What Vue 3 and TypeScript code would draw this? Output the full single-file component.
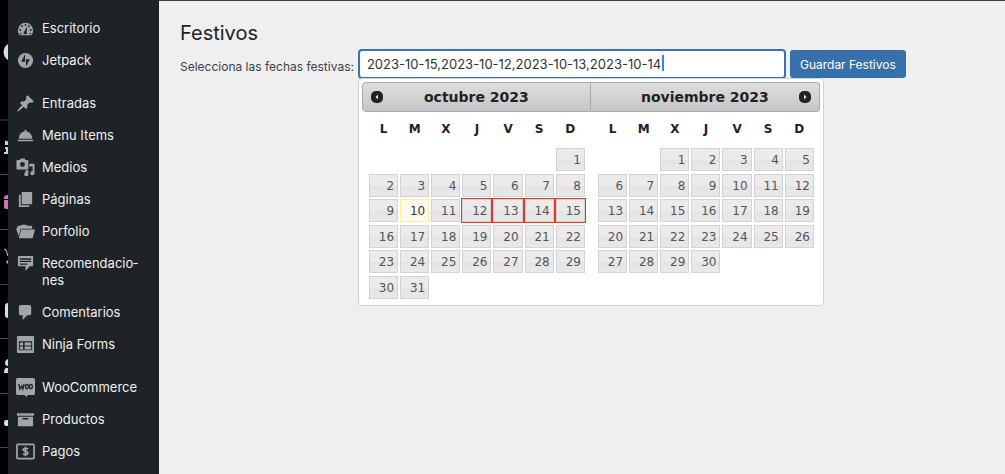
<script setup lang="ts">
import { ref } from 'vue'

interface MenuItem {
  label: string
  icon: string
  gap?: boolean
}

interface Month {
  title: string
  offset: number
  days: number
  today?: number
  selected: number[]
}

const menu: MenuItem[] = [
  { label: 'Escritorio', icon: 'dashboard' },
  { label: 'Jetpack', icon: 'jetpack' },
  { label: 'Entradas', icon: 'pin', gap: true },
  { label: 'Menu Items', icon: 'food' },
  { label: 'Medios', icon: 'media' },
  { label: 'Páginas', icon: 'pages' },
  { label: 'Porfolio', icon: 'portfolio' },
  { label: 'Recomendacio\u00adnes', icon: 'testimonial' },
  { label: 'Comentarios', icon: 'comment' },
  { label: 'Ninja Forms', icon: 'form' },
  { label: 'WooCommerce', icon: 'woo', gap: true },
  { label: 'Productos', icon: 'archive' },
  { label: 'Pagos', icon: 'money' },
]

const weekdays = ['L', 'M', 'X', 'J', 'V', 'S', 'D']

const months: Month[] = [
  { title: 'octubre 2023', offset: 6, days: 31, today: 10, selected: [12, 13, 14, 15] },
  { title: 'noviembre 2023', offset: 2, days: 30, selected: [] },
]

const dates = ref('2023-10-15,2023-10-12,2023-10-13,2023-10-14')

function weeks(month: Month): number[][] {
  const count = Math.ceil((month.offset + month.days) / 7)
  return Array.from({ length: count }, (_, w) =>
    Array.from({ length: 7 }, (_, d) => {
      const day = w * 7 + d - month.offset + 1
      return day >= 1 && day <= month.days ? day : 0
    }),
  )
}
</script>

<template>
  <div class="screen">
    <div class="rail" aria-hidden="true">
      <svg width="8" height="474" viewBox="0 0 8 474">
        <path d="M0 120h8M0 174.500h8M0 229.500h8M0 284.500h8M0 338.500h8M0 393.500h8M0 447.500h8" stroke="#4a4a4a" />
        <circle cx="13" cy="52" r="9.500" fill="#dcdcdc" />
        <path d="M5 141q3-1 3 1v3H5zM5 147h3v7H4v-2h2v-3H5z" fill="#d0d0d0" />
        <path d="M4 198q0-3 4-3v4H4zM4 200h4v9H6q-2 0-2-2z" fill="#c779c0" />
        <path d="M4 249q3 0 3 4l1 3M7 261h1v2H7z" stroke="#c8c8c8" fill="none" />
        <path d="M8 303q-3 0-3 3v9q0 3 3 3z" fill="#e0e0e0" />
        <path d="M8 359q-3 1-3 4t3 3zM4 373q0-6 4-5v5z" fill="#d8d8d8" />
        <path d="M8 420H6q-2 0-2 3t2 3h2z" fill="#e0e0e0" />
      </svg>
    </div>

    <nav class="sidebar" aria-label="Menú principal">
      <ul>
        <li v-for="item in menu" :key="item.label" :class="{ gap: item.gap }">
          <a href="#">
            <svg class="icon" width="20" height="20" viewBox="0 0 20 20" aria-hidden="true">
              <template v-if="item.icon === 'dashboard'">
                <path fill="currentColor" d="M3.800 17h12.400A7.900 7.900 0 0 0 18 12a8 8 0 1 0-16 0c0 2 .7 3.700 1.800 5z" />
                <path fill="#1d2327" d="M10 5a1 1 0 1 1 0 2 1 1 0 0 1 0-2zM6.300 6.500a1 1 0 1 1 0 2 1 1 0 0 1 0-2zM13.700 6.500a1 1 0 1 1 0 2 1 1 0 0 1 0-2zM4.500 10.500a1 1 0 1 1 0 2 1 1 0 0 1 0-2zM15.500 10.500a1 1 0 1 1 0 2 1 1 0 0 1 0-2zM11.700 8l-.4 5.500a1.700 1.700 0 1 1-2.400-.6zM4 15h2v1H4zM14 15h2v1h-2z" />
              </template>
              <template v-else-if="item.icon === 'jetpack'">
                <circle cx="10" cy="10" r="8" fill="currentColor" />
                <path fill="#1d2327" d="M9.500 3.500v7.800h-4zM10.500 16.500V8.700h4z" />
              </template>
              <path v-else-if="item.icon === 'pin'" fill="currentColor" d="M10.440 3.020l1.820-1.820 6.360 6.350-1.830 1.820c-1.050-.68-2.480-.57-3.410.36l-.75.750c-.92.930-1.040 2.350-.35 3.410l-1.830 1.820-2.410-2.410-2.800 2.790c-.42.420-3.380 2.710-3.800 2.290s1.860-3.390 2.280-3.810l2.790-2.790L4.100 9.360l1.830-1.820c1.050.690 2.480.570 3.400-.360l.75-.75c.93-.92 1.050-2.350.36-3.410z" />
              <path v-else-if="item.icon === 'food'" fill="currentColor" d="M10 4a1.200 1.200 0 0 1 1 1.900c3.700.5 6 3.600 6 7.600H3c0-4 2.300-7.100 6-7.600A1.200 1.200 0 0 1 10 4zM2 14.500h16V16H2z" />
              <path v-else-if="item.icon === 'media'" fill="currentColor" fill-rule="evenodd" d="M2 2h2l1-1.500h4L10 2h2a1 1 0 0 1 1 1v8a1 1 0 0 1-1 1H1.500a1 1 0 0 1-1-1V3a1 1 0 0 1 1-1zM6.800 4.300a2.600 2.600 0 1 0 0 5.200 2.600 2.600 0 0 0 0-5.200zM14 6h5.500v10a2.200 2.200 0 1 1-2-2.200V9H14zM10 13h3v4a2.200 2.200 0 1 1-2-2.200h-1z" />
              <path v-else-if="item.icon === 'pages'" fill="currentColor" d="M6 2h11v13H6zM3 5h2v11h9v2H3z" />
              <path v-else-if="item.icon === 'portfolio'" fill="currentColor" d="M1 5h1V4h3l1-1h5l1 1h5v3H5L3 15 0 7h1zM5.500 8H20l-2.500 9H3z" />
              <path v-else-if="item.icon === 'testimonial'" fill="currentColor" fill-rule="evenodd" d="M3 2h14a1 1 0 0 1 1 1v9a1 1 0 0 1-1 1h-2.500L10 18v-5H3a1 1 0 0 1-1-1V3a1 1 0 0 1 1-1zM4 4.500V6h12V4.500zM4 7.200v1.300h12V7.200zM4 10v1.300h8V10z" />
              <path v-else-if="item.icon === 'comment'" fill="currentColor" d="M5 2h9q2 0 2 2v7q0 2-2 2h-2l-5 5v-5H5q-2 0-2-2V4q0-2 2-2z" />
              <path v-else-if="item.icon === 'form'" fill="currentColor" fill-rule="evenodd" d="M2 1h16q1 0 1 1v16q0 1-1 1H2q-1 0-1-1V2q0-1 1-1zM3 6.500V16h14V6.500zM4 8h3.500v3H4zM9 8h7v3H9zM4 12.200h3.500v3H4zM9 12.200h7v3H9z" />
              <template v-else-if="item.icon === 'woo'">
                <path fill="currentColor" d="M2 0h16q2 0 2 2v14q0 2-2 2h-5.500L11 20l-2-2H2q-2 0-2-2V2q0-2 2-2z" />
                <path d="M3 6.500l1.200 5L6 8.500l1.200 3L8.500 6.500" stroke="#1d2327" stroke-width="1.500" fill="none" />
                <ellipse cx="11.500" cy="9" rx="1.500" ry="2.300" stroke="#1d2327" stroke-width="1.300" fill="none" />
                <ellipse cx="15.700" cy="9" rx="1.500" ry="2.300" stroke="#1d2327" stroke-width="1.300" fill="none" />
              </template>
              <path v-else-if="item.icon === 'archive'" fill="currentColor" fill-rule="evenodd" d="M1 3.500h18v2.500H1zM2 7h16v10H2zM7 8.500V10h6V8.500z" />
              <template v-else>
                <rect x="1" y="2.500" width="18" height="15" rx="1" fill="none" stroke="currentColor" stroke-width="1.800" />
                <path d="M12.800 7.300Q10 6 8 7.200c-1.200 1.500.4 2.300 2 2.600s3.200 1.200 2.200 2.700q-1.800 1.500-5 .2M10 5v10" fill="none" stroke="currentColor" stroke-width="1.800" />
              </template>
            </svg>
            <span>{{ item.label }}</span>
          </a>
        </li>
      </ul>
    </nav>

    <main class="content">
      <h1>Festivos</h1>
      <form class="form" @submit.prevent>
        <label for="dates">Selecciona las fechas festivas:</label>
        <div class="field">
          <input id="dates" v-model="dates" type="text" autocomplete="off" />
          <span class="caret" aria-hidden="true"></span>
          <div class="picker">
            <section v-for="(month, i) in months" :key="month.title" class="month">
              <header>
                <button v-if="i === 0" type="button" class="nav prev" aria-label="Anterior">
                  <svg width="12" height="12" viewBox="0 0 12 12"><rect width="12" height="12" rx="5" fill="#222" /><path d="M7 3.500v5L4.500 6z" fill="#e8e8e8" /></svg>
                </button>
                <h2>{{ month.title }}</h2>
                <button v-if="i === 1" type="button" class="nav next" aria-label="Siguiente">
                  <svg width="12" height="12" viewBox="0 0 12 12"><rect width="12" height="12" rx="5" fill="#222" /><path d="M5 3.500v5L7.500 6z" fill="#e8e8e8" /></svg>
                </button>
              </header>
              <table>
                <thead>
                  <tr>
                    <th v-for="d in weekdays" :key="d" scope="col">{{ d }}</th>
                  </tr>
                </thead>
                <tbody>
                  <tr v-for="(week, w) in weeks(month)" :key="w">
                    <td v-for="(day, d) in week" :key="d" :class="{ selected: month.selected.includes(day) }">
                      <a v-if="day" href="#" :class="{ today: day === month.today }">{{ day }}</a>
                    </td>
                  </tr>
                </tbody>
              </table>
            </section>
          </div>
        </div>
        <button type="submit" class="save">Guardar Festivos</button>
      </form>
    </main>
  </div>
</template>

<style>
body {
  background: #efefef;
}
</style>

<style scoped>
.screen {
  display: flex;
  height: 100vh;
  overflow: hidden;
  font-family: Inter, "Liberation Sans", sans-serif;
  font-size: 13px;
  color: #3c434a;
}

.rail {
  flex: 0 0 8px;
  background: #000;
}

.rail svg {
  display: block;
}

.sidebar {
  flex: 0 0 151px;
  background: #1d2327;
}

.sidebar ul {
  margin: 0;
  padding: 12px 0 0;
  list-style: none;
}

.sidebar .gap {
  margin-top: 11px;
}

.sidebar a {
  display: flex;
  gap: 7px;
  padding: 8px 16px 7px 8px;
  color: #f0f0f1;
  line-height: 17px;
  text-decoration: none;
}

.icon {
  flex: none;
  width: 19px;
  height: 19px;
  margin: -1px 0;
  color: #a0a5aa;
}

.content {
  flex: 1;
  min-width: 0;
  padding: 20px 20px 0 21px;
  border-top: 1px solid #3c4046;
}

h1 {
  margin: 0;
  color: #1d2327;
  font-size: 20px;
  font-weight: 400;
  line-height: 25px;
}

.form {
  display: flex;
  align-items: center;
  gap: 4px;
  margin-top: 3px;
}

label {
  padding-top: 4px;
  white-space: nowrap;
  font-size: 12px;
}

.field {
  position: relative;
  flex: 0 1 428px;
}

input {
  display: block;
  box-sizing: border-box;
  width: 100%;
  height: 30px;
  padding: 0 7px;
  border: 2px solid #3a72ad;
  border-radius: 4px;
  outline: none;
  background: #fff;
  color: #2c3338;
  font: inherit;
}

.caret {
  position: absolute;
  top: 6px;
  left: 304px;
  width: 2px;
  height: 16px;
  background: #3b82f6;
}

.save {
  height: 28px;
  padding: 0 10px;
  border: 0;
  border-radius: 3px;
  background: #3870ab;
  color: #fff;
  font: inherit;
  font-size: 12px;
  white-space: nowrap;
}

.picker {
  position: absolute;
  top: 29px;
  left: 0;
  display: flex;
  box-sizing: border-box;
  width: 466px;
  padding: 3px 3px 5px;
  border: 1px solid #d3d3d3;
  border-radius: 4px;
  background: #fff;
  color: #222;
  font-family: Verdana, "DejaVu Sans", sans-serif;
}

.month {
  flex: 1;
}

.month header {
  display: flex;
  align-items: center;
  box-sizing: border-box;
  height: 30px;
  padding: 0 8px;
  border: 1px solid #aaa;
  border-radius: 4px 0 0 4px;
  background: linear-gradient(#dedede, #c6c6c6);
}

.month + .month header {
  border-left: 0;
  border-radius: 0 4px 4px 0;
}

h2 {
  flex: 1;
  margin: 0;
  font-size: 14px;
  line-height: 20px;
  text-align: center;
}

.nav {
  flex: none;
  width: 12px;
  height: 12px;
  padding: 0;
  border: 0;
  background: none;
}

.nav svg {
  display: block;
}

.prev {
  margin-right: -12px;
}

.next {
  margin-left: -12px;
}

table {
  width: 218px;
  margin-left: 6px;
  border-collapse: collapse;
  table-layout: fixed;
  font-size: 12px;
}

th {
  height: 34px;
  padding: 0;
  line-height: 34px;
}

td {
  height: 24px;
  padding: 1px;
}

tbody tr:nth-child(odd) td {
  height: 23px;
}

tbody tr:first-child td {
  height: 24px;
}

td.selected {
  box-shadow: inset 0 0 0 1px #e8352b;
}

td a {
  display: block;
  box-sizing: border-box;
  height: 23px;
  padding: 0 3px;
  border: 1px solid #d3d3d3;
  background: linear-gradient(#ebebeb 50%, #e4e4e4 55%, #e9e9e9);
  color: #555;
  line-height: 22px;
  text-align: right;
  text-decoration: none;
}

td a.today {
  border-color: #fcefa1;
  background: #fbf9ee;
  color: #363636;
}
</style>
